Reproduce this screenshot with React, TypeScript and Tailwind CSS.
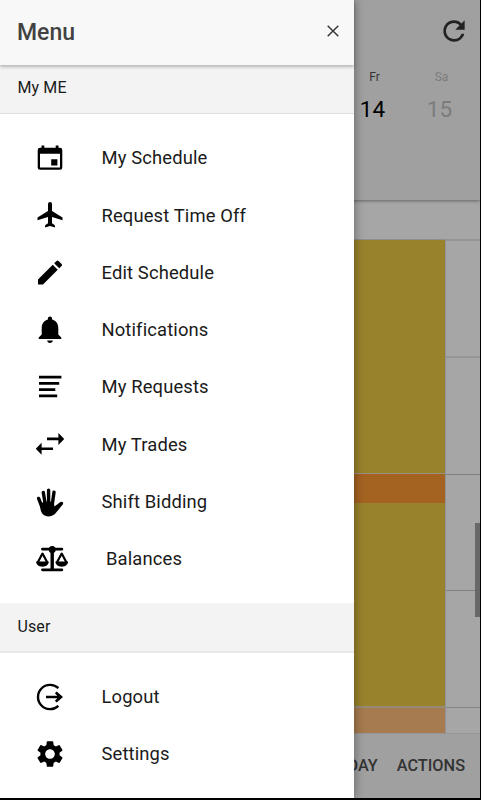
import React from 'react';
import { MdEdit, MdRefresh, MdSettings } from 'react-icons/md';

const ScheduleIcon: React.FC = () => (
  <svg className="w-[28px] h-[28px]" viewBox="0 0 28 28" fill="currentColor">
    <path
      fillRule="evenodd"
      d="M5.5 1.6h2.8v2.2h11.4V1.6h2.8v2.2h1.4a2.4 2.4 0 0 1 2.4 2.4v17.2a2.4 2.4 0 0 1-2.4 2.4H4.1a2.4 2.4 0 0 1-2.4-2.4V6.2a2.4 2.4 0 0 1 2.4-2.4h1.4zM4 9.8v13.7h20V9.8zM15.2 15.3h6.2v6.2h-6.2z"
    />
  </svg>
);

const PlaneIcon: React.FC = () => (
  <svg className="w-[28px] h-[28px]" viewBox="0 0 28 28" fill="currentColor">
    <path d="M26.5 19.2v-2.6L16 10.1V3.1a2 2 0 0 0-4 0v7L1.5 16.6v2.6L12 16v6.3l-2.9 2v2.1l4.9-1.3 4.9 1.3v-2.1l-2.9-2V16z" />
  </svg>
);

const BellIcon: React.FC = () => (
  <svg className="w-[28px] h-[28px]" viewBox="0 0 28 28" fill="currentColor">
    <path d="M14 .5c-1.2 0-2.1.8-2.1 2v.9C8 4.4 5.7 7.6 5.7 12v6.6l-3 2.9v1.6h22.6v-1.6l-3-2.9V12c0-4.4-2.3-7.6-6.2-8.6v-.9c0-1.2-.9-2-2.1-2zM11.2 24.6h5.6c0 1.5-1.2 2.5-2.8 2.5s-2.8-1-2.8-2.5z" />
  </svg>
);

const RequestsIcon: React.FC = () => (
  <svg className="w-[28px] h-[28px]" viewBox="0 0 28 28" fill="currentColor">
    <path d="M3 2.8h22.4v2.7H3zM3 9.1h20.2v2.7H3zM3 15.3h16.3V18H3zM3 21.5h18.2v2.7H3z" />
  </svg>
);

const TradesIcon: React.FC = () => (
  <svg className="w-[28px] h-[28px]" viewBox="0 0 28 28" fill="currentColor">
    <path d="M11 7.5h11.4V3l5.8 6-5.8 6v-4.8H11zM17 17.4H5.6v-4.6l-5.8 6 5.8 6v-4.7H17z" />
  </svg>
);

const HandIcon: React.FC = () => (
  <svg className="w-[28px] h-[30px]" viewBox="0 0 28 30">
    <g fill="none" stroke="currentColor" strokeWidth="3.4" strokeLinecap="round">
      <path d="M2.6 11.4 6 20M7.3 5.5l2 12M12.6 3.1v14M18 5.3l-1.7 12" />
    </g>
    <path
      fill="currentColor"
      d="M3.6 16.5 8 15l9.7-.4.8 4.8 5.2-4c1.3-1 2.8-.8 3.3 0 .5.9.1 1.7-.7 2.7l-5.7 7c-2.2 2.9-4.6 4.3-7.8 4.3-5.2 0-7.6-3.1-8.3-7.4z"
    />
  </svg>
);

const BalanceIcon: React.FC = () => (
  <svg className="w-[32px] h-[28px]" viewBox="0 0 32 28">
    <g fill="none" stroke="currentColor" strokeLinecap="round" strokeLinejoin="round">
      <path strokeWidth="2.7" d="M6.4 4.2h19.5M6.4 24.8h19.5" />
      <path strokeWidth="3.4" strokeLinecap="butt" d="M16.2 4v21" />
      <path strokeWidth="2.2" d="M1.7 17.5 6.5 8.6l4.8 8.9M20.9 17.5l4.8-8.9 4.8 8.9" />
    </g>
    <g fill="currentColor">
      <circle cx="16.2" cy="4.5" r="3.5" />
      <path d="M.2 16.6h12.5c0 3.3-2.5 5.2-6.2 5.2s-6.3-1.9-6.3-5.2zM19.5 16.6H32c0 3.3-2.5 5.2-6.2 5.2s-6.3-1.9-6.3-5.2z" />
    </g>
  </svg>
);

const LogoutIcon: React.FC = () => (
  <svg className="w-[28px] h-[28px]" viewBox="0 0 28 28">
    <path fill="none" stroke="currentColor" strokeWidth="2.4" d="M22.4 5.2A12.1 12.1 0 1 0 22.4 22.8" />
    <path fill="currentColor" d="M10 12.7h11.3l-2.4-2.5 1.8-1.8 6.3 5.6-6.3 5.6-1.8-1.8 2.4-2.5H10z" />
  </svg>
);

type Item = { label: string; icon: React.ReactNode; wide?: boolean };

const myItems: Item[] = [
  { label: 'My Schedule', icon: <ScheduleIcon /> },
  { label: 'Request Time Off', icon: <PlaneIcon /> },
  { label: 'Edit Schedule', icon: <MdEdit className="w-[33px] h-[33px]" /> },
  { label: 'Notifications', icon: <BellIcon /> },
  { label: 'My Requests', icon: <RequestsIcon /> },
  { label: 'My Trades', icon: <TradesIcon /> },
  { label: 'Shift Bidding', icon: <HandIcon /> },
  { label: 'Balances', icon: <BalanceIcon />, wide: true },
];

const userItems: Item[] = [
  { label: 'Logout', icon: <LogoutIcon /> },
  { label: 'Settings', icon: <MdSettings className="w-[32px] h-[32px]" /> },
];

const MenuItem: React.FC<Item> = ({ label, icon, wide }) => (
  <li className="flex items-center h-[57.25px] pl-[34px]">
    <span className={`flex justify-center shrink-0 text-black ${wide ? 'w-9 mr-9' : 'w-8 mr-[35.5px]'}`}>{icon}</span>
    <span className="text-[18.4px] tracking-[0.13px]">{label}</span>
  </li>
);

const Calendar: React.FC = () => (
  <div className="flex flex-col w-[480px] h-[798px] bg-[#a6a6a6]">
    <header className="relative h-[200px] shrink-0 bg-[#a0a0a0] shadow-[0_1px_3px_rgba(0,0,0,0.4)]">
      <div className="flex justify-end pt-[15px] pr-[10px]">
        <MdRefresh className="w-[32px] h-[32px] text-[#222]" />
      </div>
      <div className="flex justify-end pt-[22px] pr-[5px] text-center">
        <div className="w-[67px]">
          <div className="text-xs leading-4 text-[#333]">Fr</div>
          <div className="mt-[10px] -ml-[4px] text-[22.5px] leading-7 text-black">14</div>
        </div>
        <div className="w-[67px] text-[#7c7c7c]">
          <div className="text-xs leading-4">Sa</div>
          <div className="mt-[10px] -ml-[4px] text-[22.5px] leading-7">15</div>
        </div>
      </div>
    </header>
    <div className="flex h-[533px] pt-[39px]">
      <div className="flex flex-col w-[445px]">
        <div className="h-px bg-[#8e8e8e]" />
        <div className="h-[233px] bg-[#98822c]" />
        <div className="h-px bg-[#999182]" />
        <div className="h-[29px] bg-[#a56322]" />
        <div className="h-[203px] bg-[#98822c]" />
        <div className="h-[2px] bg-[#968a78]" />
        <div className="h-[25px] bg-[#a67b4f]" />
      </div>
      <div className="flex flex-1 flex-col border-l border-[#929292]">
        <div className="h-[2px] bg-[#959595]" />
        <div className="h-[115px]" />
        <div className="h-[2px] bg-[#959595]" />
        <div className="h-[116px]" />
        <div className="h-px bg-[#808080]" />
        <div className="h-[115px]" />
        <div className="h-px bg-[#808080]" />
        <div className="h-[116px]" />
        <div className="h-px bg-[#858585]" />
      </div>
    </div>
    <footer className="flex flex-1 items-center justify-end gap-[19px] pr-[15px] border-t border-[#979797] bg-[#a0a0a0] text-[16.3px] font-medium text-[#333]">
      <span>TODAY</span>
      <span>ACTIONS</span>
    </footer>
  </div>
);

const App: React.FC = () => {
  return (
    <div className="relative w-[481px] h-[800px] overflow-hidden bg-black font-[Roboto,sans-serif]">
      <Calendar />
      <div className="absolute left-[475px] top-[523px] w-[5px] h-[94px] bg-[#686868]" />

      <nav className="absolute left-0 top-0 flex flex-col w-[354px] h-[798px] bg-white text-[#1a1a1a] shadow-[0_0_10px_rgba(0,0,0,0.4)]">
        <div className="relative flex items-center justify-between h-[65px] shrink-0 pl-[17px] pr-[15px] bg-[#f8f8f8] shadow-[0_2px_3px_rgba(0,0,0,0.25)]">
          <h1 className="pt-[2px] text-[23px] font-medium text-[#424242]">Menu</h1>
          <svg className="w-3 h-3 -mt-[3px]" viewBox="0 0 12 12" stroke="#333" strokeWidth="1.4">
            <path d="M.7.7l10.6 10.6M11.3.7L.7 11.3" />
          </svg>
        </div>
        <div className="flex items-center h-[49px] shrink-0 pl-[17.5px] pb-[3px] border-b border-[#dedede] bg-[#f3f3f3] text-base tracking-[0.1px]">My ME</div>
        <ul className="pt-[15.5px] pb-[15.5px]">
          {myItems.map((item) => (
            <MenuItem key={item.label} {...item} />
          ))}
        </ul>
        <div className="flex items-center h-[50px] shrink-0 pl-[17.5px] border-b-2 border-[#e8e8e8] bg-[#f3f3f3] text-base tracking-[0.1px]">User</div>
        <ul className="pt-[15px]">
          {userItems.map((item) => (
            <MenuItem key={item.label} {...item} />
          ))}
        </ul>
      </nav>
    </div>
  );
};

export default App;
